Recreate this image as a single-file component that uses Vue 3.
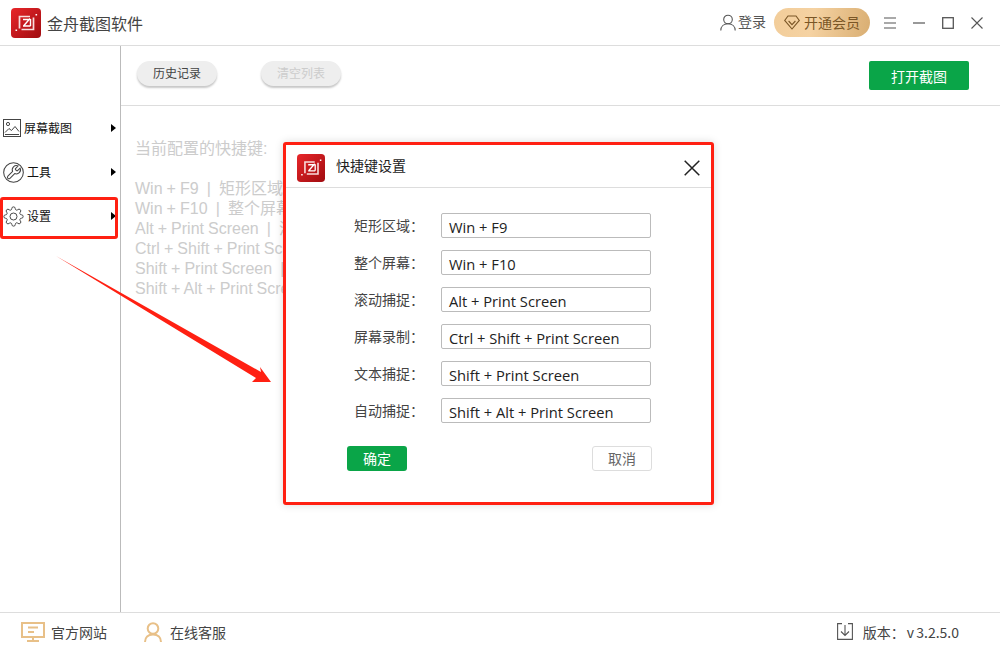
<script setup>
// Left menu entries
const menus = [
  { key: 'shot', label: '屏幕截图' },
  { key: 'tool', label: '工具' },
  { key: 'set', label: '设置', active: true },
]

// Shortcut rows in the dialog
const shortcuts = [
  { label: '矩形区域', keys: 'Win + F9' },
  { label: '整个屏幕', keys: 'Win + F10' },
  { label: '滚动捕捉', keys: 'Alt + Print Screen' },
  { label: '屏幕录制', keys: 'Ctrl + Shift + Print Screen' },
  { label: '文本捕捉', keys: 'Shift + Print Screen' },
  { label: '自动捕捉', keys: 'Shift + Alt + Print Screen' },
]
</script>

<template>
  <div class="app">
    <svg width="0" height="0" class="defs">
      <defs>
        <linearGradient id="logo-bg" x1="0" y1="0" x2="1" y2="1">
          <stop offset="0" stop-color="#e8262a" />
          <stop offset="1" stop-color="#a00c10" />
        </linearGradient>
      </defs>
      <symbol id="logo" viewBox="0 0 30 30">
        <rect width="30" height="30" rx="4" fill="url(#logo-bg)" />
        <path d="M8.500 20.500V8.500H19M22.500 9.500V21.500H10.500" fill="none" stroke="#f8dcdc" stroke-width="1.700" />
        <path d="M12 18h7.500M19.500 11v7M12.500 18l6.500-7.500M12 11.500h6" fill="none" stroke="#fff" stroke-width="1.400" />
        <path d="M4.500 21.500h1.600v1.600H4.500zM24.500 6h1.600v1.600h-1.600z" fill="#fff" />
      </symbol>
    </svg>

    <header class="topbar">
      <div class="brand">
        <svg class="brand-logo"><use href="#logo" /></svg>
        <span>金舟截图软件</span>
      </div>
      <div class="top-actions">
        <svg class="user-icon" viewBox="0 0 16 17" fill="none" stroke="#555" stroke-width="1.100">
          <circle cx="8" cy="5.500" r="4.300" />
          <path d="M.8 16.500c0-4 3-6.700 7.200-6.700s7.200 2.700 7.200 6.700" />
        </svg>
        <span class="login">登录</span>
        <div class="vip">
          <svg viewBox="0 0 16 15" fill="none" stroke="#7a5626" stroke-width="1.100">
            <path d="M4 1h8l3.300 4.400L8 14 .7 5.400z" />
            <path d="M4.600 6 8 9.600 11.400 6" />
          </svg>
          <span>开通会员</span>
        </div>
        <div class="win-btns">
          <svg viewBox="0 0 12 12" stroke="#555" stroke-width="1.200" fill="none"><path d="M0 1h12M0 6h12M0 11h12" /></svg>
          <svg viewBox="0 0 12 12" stroke="#555" stroke-width="1.200" fill="none"><path d="M0 6h12" /></svg>
          <svg viewBox="0 0 12 12" stroke="#555" stroke-width="1.300" fill="none"><rect x=".7" y=".7" width="10.600" height="10.600" /></svg>
          <svg viewBox="0 0 12 12" stroke="#555" stroke-width="1.100" fill="none"><path d="M.5.5l11 11M11.500.5l-11 11" /></svg>
        </div>
      </div>
    </header>

    <div class="body">
      <aside class="side">
        <div v-for="m in menus" :key="m.key" class="side-item" :class="{ 'side-item--active': m.active }">
          <svg v-if="m.key === 'shot'" class="ico-shot" viewBox="0 0 18 18" fill="none" stroke="#444" stroke-width="1">
            <rect x=".5" y=".5" width="17" height="17" />
            <circle cx="5" cy="5" r="1.600" />
            <path d="M2 13.500l4-4 2.500 2L12 7.500l4 5M2 15.500h14" />
          </svg>
          <svg v-else-if="m.key === 'tool'" class="ico-round" viewBox="0 0 22 22" fill="none" stroke="#444" stroke-width="1.100">
            <circle cx="11" cy="11" r="10.300" />
            <path transform="translate(2.500 2.400) scale(.72)" stroke-width="1.500" d="M14.700 6.300a1 1 0 0 0 0 1.400l1.600 1.600a1 1 0 0 0 1.400 0l3.770-3.770a6 6 0 0 1-7.940 7.940l-6.910 6.910a2.120 2.120 0 0 1-3-3l6.910-6.910a6 6 0 0 1 7.940-7.940l-3.760 3.760z" />
          </svg>
          <svg v-else class="ico-round" viewBox="0 0 24 24" fill="none" stroke="#444" stroke-width="1.100">
            <circle cx="12" cy="12" r="4" />
            <path d="M19.400 15a1.650 1.650 0 0 0 .33 1.820l.06.06a2 2 0 0 1 0 2.830 2 2 0 0 1-2.830 0l-.06-.06a1.650 1.650 0 0 0-1.820-.33 1.650 1.650 0 0 0-1 1.510V21a2 2 0 0 1-2 2 2 2 0 0 1-2-2v-.09A1.650 1.650 0 0 0 9 19.400a1.650 1.650 0 0 0-1.820.33l-.06.06a2 2 0 0 1-2.830 0 2 2 0 0 1 0-2.830l.06-.06a1.650 1.650 0 0 0 .33-1.820 1.650 1.650 0 0 0-1.510-1H3a2 2 0 0 1-2-2 2 2 0 0 1 2-2h.09A1.650 1.650 0 0 0 4.600 9a1.650 1.650 0 0 0-.33-1.820l-.06-.06a2 2 0 0 1 0-2.830 2 2 0 0 1 2.830 0l.06.06a1.650 1.650 0 0 0 1.820.33H9a1.650 1.650 0 0 0 1-1.510V3a2 2 0 0 1 2-2 2 2 0 0 1 2 2v.09a1.650 1.650 0 0 0 1 1.510 1.650 1.650 0 0 0 1.820-.33l.06-.06a2 2 0 0 1 2.830 0 2 2 0 0 1 0 2.830l-.06.06a1.650 1.650 0 0 0-.33 1.820V9a1.650 1.650 0 0 0 1.510 1H21a2 2 0 0 1 2 2 2 2 0 0 1-2 2h-.09a1.650 1.650 0 0 0-1.510 1z" />
          </svg>
          <span>{{ m.label }}</span>
          <i class="caret"></i>
        </div>
      </aside>

      <main class="content">
        <div class="toolbar">
          <button class="pill">历史记录</button>
          <button class="pill pill--off">清空列表</button>
          <button class="open-btn">打开截图</button>
        </div>
        <div class="current">
          <p class="current-title">当前配置的快捷键:</p>
          <p v-for="s in shortcuts" :key="s.label">{{ s.keys }} &nbsp;|&nbsp; {{ s.label }}</p>
        </div>
      </main>

      <!-- annotation arrow drawn on the screenshot -->
      <svg class="mark-arrow" viewBox="0 0 230 135">
        <path d="M1 1 206 117 205 112 216 127 197 127 201 123z" fill="#ff2012" />
      </svg>

      <section class="dialog">
        <div class="dialog-head">
          <svg class="dialog-logo"><use href="#logo" /></svg>
          <span class="dialog-title">快捷键设置</span>
          <svg class="dialog-close" viewBox="0 0 16 16" fill="none" stroke="#222" stroke-width="1.500">
            <path d="M.7.7l14.600 14.600M15.300.7.700 15.300" />
          </svg>
        </div>
        <div class="dialog-body">
          <div v-for="s in shortcuts" :key="s.label" class="row">
            <label>{{ s.label }}：</label>
            <div class="keybox">{{ s.keys }}</div>
          </div>
          <div class="dialog-foot">
            <button class="ok">确定</button>
            <button class="cancel">取消</button>
          </div>
        </div>
      </section>
    </div>

    <footer class="bottom">
      <div class="link">
        <svg class="ico-monitor" viewBox="0 0 24 20" fill="none" stroke="#e8c088" stroke-width="2">
          <rect x="1" y="1" width="22" height="14" />
          <path d="M7 5.500h10M7 10h6M12 15v4M6 19h12" />
        </svg>
        <span>官方网站</span>
      </div>
      <div class="link link--service">
        <svg class="ico-person" viewBox="0 0 18 20" fill="none" stroke="#e8c088" stroke-width="2">
          <circle cx="9" cy="6.500" r="5.300" />
          <path d="M1 20c0-4.500 3-7.500 8-7.500s8 3 8 7.500" />
        </svg>
        <span>在线客服</span>
      </div>
      <div class="version">
        <svg viewBox="0 0 16 17" fill="none" stroke="#555" stroke-width="1.100">
          <path d="M5 .6H.6v15.800h14.800V.6H11M8 2v10M4 8.500l4 4 4-4" />
        </svg>
        <span>版本： v 3.2.5.0</span>
      </div>
    </footer>
  </div>
</template>

<style>
html,
body {
  margin: 0;
  background: #fff;
}
</style>

<style scoped>
.app {
  width: 1000px;
  height: 650px;
  display: flex;
  flex-direction: column;
  overflow: hidden;
  background: #fff;
  color: #444;
  font-family: "Noto Sans CJK SC", "Noto Sans", sans-serif;
  font-size: 14px;
}

.defs {
  position: absolute;
}

.topbar {
  height: 46px;
  flex: none;
  box-sizing: border-box;
  display: flex;
  align-items: center;
  justify-content: space-between;
  padding-left: 11px;
  border-bottom: 1px solid #ddd;
}

.brand {
  display: flex;
  align-items: center;
  gap: 6px;
  font-size: 16px;
  color: #444;
}

.brand-logo {
  width: 30px;
  height: 30px;
}

.top-actions {
  display: flex;
  align-items: center;
  padding-right: 17px;
}

.user-icon {
  width: 16px;
  height: 17px;
  margin-right: 2px;
}

.login {
  color: #555;
  margin-right: 8px;
  padding-bottom: 3px;
}

.vip {
  width: 96px;
  height: 29px;
  box-sizing: border-box;
  padding-left: 10px;
  display: flex;
  align-items: center;
  gap: 4px;
  border-radius: 15px;
  background: linear-gradient(100deg, #f2cd9a, #f5d2a2 40%, #d9ae72);
  color: #7a5626;
}

.vip span {
  padding-bottom: 2px;
}

.vip svg {
  width: 16px;
  height: 15px;
}

.win-btns {
  margin-left: 14px;
  display: flex;
  align-items: center;
  gap: 17px;
}

.win-btns svg {
  width: 12px;
  height: 12px;
}

.body {
  position: relative;
  flex: 1;
  display: flex;
  min-height: 0;
}

.side {
  width: 121px;
  flex: none;
  box-sizing: border-box;
  padding-top: 60px;
  border-right: 1px solid #bbb;
}

.side-item {
  position: relative;
  height: 44px;
  display: flex;
  align-items: center;
  gap: 3px;
  padding-left: 3px;
  font-size: 12px;
  color: #111;
}

.side-item span {
  padding-bottom: 2px;
}

.side-item--active::after {
  content: "";
  position: absolute;
  left: 0;
  top: 3px;
  width: 118px;
  height: 42px;
  box-sizing: border-box;
  border: 3px solid #ff2012;
  border-radius: 3px;
}

.ico-shot {
  width: 18px;
  height: 18px;
}

.ico-round {
  width: 21px;
  height: 21px;
}

.caret {
  position: absolute;
  left: 111px;
  top: 18px;
  border-left: 5px solid #000;
  border-top: 4px solid transparent;
  border-bottom: 4px solid transparent;
}

.content {
  flex: 1;
  min-width: 0;
}

.toolbar {
  height: 60px;
  box-sizing: border-box;
  border-bottom: 1px solid #ddd;
  display: flex;
  align-items: flex-start;
  padding: 15px 31px 0 16px;
  gap: 44px;
}

.pill {
  width: 80px;
  height: 25px;
  padding: 0 0 2px;
  border: 0;
  border-radius: 13px;
  background: #eee;
  box-shadow: 0 2px 2px rgba(0, 0, 0, 0.22);
  font: inherit;
  font-size: 12px;
  color: #444;
}

.pill--off {
  color: #ccc;
}

.open-btn {
  margin-left: auto;
  width: 100px;
  height: 29px;
  padding: 0;
  border: 0;
  border-radius: 2px;
  background: #0aa548;
  color: #fff;
  font: inherit;
  font-size: 14px;
}

.current {
  width: 148px;
  overflow: hidden;
  padding: 33px 0 0 14px;
  font-family: "Liberation Sans", "Noto Sans CJK SC", sans-serif;
  font-size: 16px;
  line-height: 20px;
  color: #ccc;
}

.current p {
  margin: 0;
  white-space: nowrap;
  word-spacing: -0.4px;
}

.current .current-title {
  margin-bottom: 20px;
}

.mark-arrow {
  position: absolute;
  left: 55px;
  top: 209px;
  width: 230px;
  height: 135px;
  pointer-events: none;
}

.dialog {
  position: absolute;
  left: 283px;
  top: 96px;
  width: 431px;
  height: 363px;
  box-sizing: border-box;
  border: 3px solid #ff2012;
  border-radius: 3px;
  background: #fff;
  box-shadow: 0 0 8px rgba(0, 0, 0, 0.15);
}

.dialog-head {
  height: 42px;
  box-sizing: content-box;
  display: flex;
  align-items: center;
  padding-left: 11px;
  border-bottom: 1px solid #ddd;
  color: #222;
  font-size: 14px;
}

.dialog-logo {
  width: 28px;
  height: 28px;
  margin: 3px 11px 0 0;
}

.dialog-title {
  padding-bottom: 3px;
}

.dialog-close {
  width: 16px;
  height: 16px;
  margin: 3px 11px 0 auto;
}

.dialog-body {
  padding: 25px 0 0 68px;
}

.row {
  height: 25px;
  margin-bottom: 12px;
  display: flex;
  align-items: center;
}

.row label {
  width: 87px;
  flex: none;
  padding-bottom: 2px;
  font-size: 14px;
  color: #444;
  white-space: nowrap;
}

.keybox {
  width: 210px;
  height: 25px;
  flex: none;
  box-sizing: border-box;
  border: 1px solid #bbb;
  border-radius: 2px;
  padding: 3px 0 0 7px;
  font-family: "Open Sans", "Noto Sans", sans-serif;
  font-size: 14.7px;
  line-height: 20px;
  color: #222;
  white-space: nowrap;
}

.dialog-foot {
  margin: 23px 0 0 -7px;
  width: 305px;
  display: flex;
  justify-content: space-between;
}

.dialog-foot button {
  width: 60px;
  height: 25px;
  padding: 0 0 2px;
  border-radius: 3px;
  font: inherit;
  font-size: 14px;
}

.ok {
  border: 0;
  background: #0aa548;
  color: #fff;
}

.cancel {
  border: 1px solid #ddd;
  background: #fff;
  color: #666;
}

.bottom {
  height: 38px;
  flex: none;
  box-sizing: border-box;
  border-top: 1px solid #ddd;
  display: flex;
  align-items: center;
  padding: 0 41px 0 21px;
  color: #444;
}

.link {
  display: flex;
  align-items: center;
  gap: 6px;
}

.link--service {
  margin-left: 37px;
  gap: 8px;
}

.ico-monitor {
  width: 24px;
  height: 20px;
}

.ico-person {
  width: 18px;
  height: 20px;
}

.version {
  margin-left: auto;
  display: flex;
  align-items: center;
  gap: 10px;
  word-spacing: -1px;
}

.version svg {
  width: 16px;
  height: 17px;
}
</style>
